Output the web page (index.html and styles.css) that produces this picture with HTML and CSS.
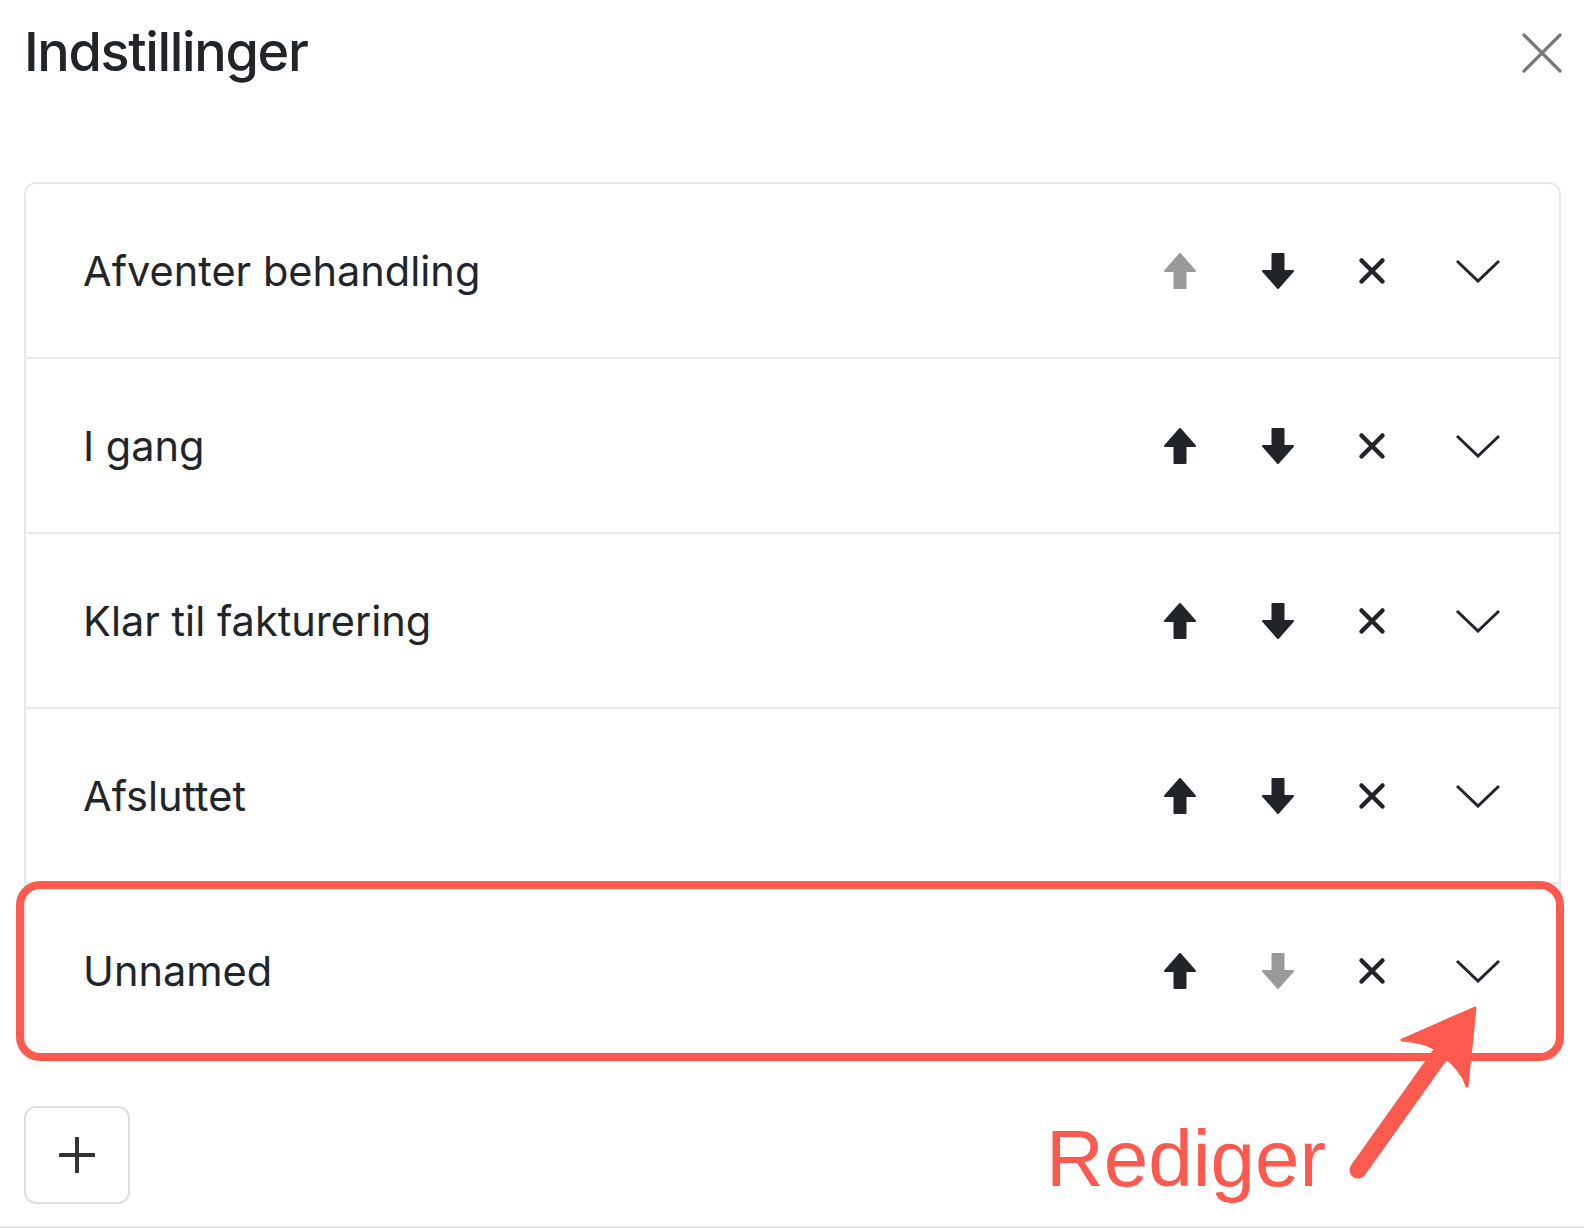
FILE: index.html
```html
<!DOCTYPE html>
<html lang="da">
<head>
<meta charset="utf-8">
<title>Indstillinger</title>
<link rel="stylesheet" href="styles.css">
</head>
<body>
<div class="modal">
  <header class="modal-header">
    <h1 class="modal-title">Indstillinger</h1>
    <button class="close-btn" aria-label="Luk">
      <svg width="40" height="40" viewBox="0 0 40 40"><path d="M2 2 L38 38 M38 2 L2 38" stroke="#777" stroke-width="3.2" stroke-linecap="round" fill="none"/></svg>
    </button>
  </header>

  <div class="modal-body">
    <ul class="status-list">
      <li class="status-row">
        <span class="status-name">Afventer behandling</span>
        <div class="row-actions">
          <button class="icon-btn arrow disabled"><svg width="34" height="38" viewBox="0 0 34 38"><path d="M17 2 L32 19 L22.5 19 L22.5 36 L11.5 36 L11.5 19 L2 19 Z" stroke="currentColor" stroke-width="2" stroke-linejoin="round" fill="currentColor"/></svg></button>
          <button class="icon-btn arrow"><svg width="34" height="38" viewBox="0 0 34 38"><path d="M17 36 L32 19 L22.5 19 L22.5 2 L11.5 2 L11.5 19 L2 19 Z" stroke="currentColor" stroke-width="2" stroke-linejoin="round" fill="currentColor"/></svg></button>
          <button class="icon-btn times"><svg width="28" height="28" viewBox="0 0 28 28"><path d="M3.5 3.5 L24.5 24.5 M24.5 3.5 L3.5 24.5" stroke="currentColor" stroke-width="4.5" stroke-linecap="round" fill="none"/></svg></button>
          <button class="icon-btn chevron"><svg width="46" height="24" viewBox="0 0 46 24"><path d="M2 2 L23 22 L44 2" stroke="currentColor" stroke-width="3" fill="none"/></svg></button>
        </div>
      </li>
      <li class="status-row">
        <span class="status-name">I gang</span>
        <div class="row-actions">
          <button class="icon-btn arrow"><svg width="34" height="38" viewBox="0 0 34 38"><path d="M17 2 L32 19 L22.5 19 L22.5 36 L11.5 36 L11.5 19 L2 19 Z" stroke="currentColor" stroke-width="2" stroke-linejoin="round" fill="currentColor"/></svg></button>
          <button class="icon-btn arrow"><svg width="34" height="38" viewBox="0 0 34 38"><path d="M17 36 L32 19 L22.5 19 L22.5 2 L11.5 2 L11.5 19 L2 19 Z" stroke="currentColor" stroke-width="2" stroke-linejoin="round" fill="currentColor"/></svg></button>
          <button class="icon-btn times"><svg width="28" height="28" viewBox="0 0 28 28"><path d="M3.5 3.5 L24.5 24.5 M24.5 3.5 L3.5 24.5" stroke="currentColor" stroke-width="4.5" stroke-linecap="round" fill="none"/></svg></button>
          <button class="icon-btn chevron"><svg width="46" height="24" viewBox="0 0 46 24"><path d="M2 2 L23 22 L44 2" stroke="currentColor" stroke-width="3" fill="none"/></svg></button>
        </div>
      </li>
      <li class="status-row">
        <span class="status-name">Klar til fakturering</span>
        <div class="row-actions">
          <button class="icon-btn arrow"><svg width="34" height="38" viewBox="0 0 34 38"><path d="M17 2 L32 19 L22.5 19 L22.5 36 L11.5 36 L11.5 19 L2 19 Z" stroke="currentColor" stroke-width="2" stroke-linejoin="round" fill="currentColor"/></svg></button>
          <button class="icon-btn arrow"><svg width="34" height="38" viewBox="0 0 34 38"><path d="M17 36 L32 19 L22.5 19 L22.5 2 L11.5 2 L11.5 19 L2 19 Z" stroke="currentColor" stroke-width="2" stroke-linejoin="round" fill="currentColor"/></svg></button>
          <button class="icon-btn times"><svg width="28" height="28" viewBox="0 0 28 28"><path d="M3.5 3.5 L24.5 24.5 M24.5 3.5 L3.5 24.5" stroke="currentColor" stroke-width="4.5" stroke-linecap="round" fill="none"/></svg></button>
          <button class="icon-btn chevron"><svg width="46" height="24" viewBox="0 0 46 24"><path d="M2 2 L23 22 L44 2" stroke="currentColor" stroke-width="3" fill="none"/></svg></button>
        </div>
      </li>
      <li class="status-row">
        <span class="status-name">Afsluttet</span>
        <div class="row-actions">
          <button class="icon-btn arrow"><svg width="34" height="38" viewBox="0 0 34 38"><path d="M17 2 L32 19 L22.5 19 L22.5 36 L11.5 36 L11.5 19 L2 19 Z" stroke="currentColor" stroke-width="2" stroke-linejoin="round" fill="currentColor"/></svg></button>
          <button class="icon-btn arrow"><svg width="34" height="38" viewBox="0 0 34 38"><path d="M17 36 L32 19 L22.5 19 L22.5 2 L11.5 2 L11.5 19 L2 19 Z" stroke="currentColor" stroke-width="2" stroke-linejoin="round" fill="currentColor"/></svg></button>
          <button class="icon-btn times"><svg width="28" height="28" viewBox="0 0 28 28"><path d="M3.5 3.5 L24.5 24.5 M24.5 3.5 L3.5 24.5" stroke="currentColor" stroke-width="4.5" stroke-linecap="round" fill="none"/></svg></button>
          <button class="icon-btn chevron"><svg width="46" height="24" viewBox="0 0 46 24"><path d="M2 2 L23 22 L44 2" stroke="currentColor" stroke-width="3" fill="none"/></svg></button>
        </div>
      </li>
      <li class="status-row">
        <span class="status-name">Unnamed</span>
        <div class="row-actions">
          <button class="icon-btn arrow"><svg width="34" height="38" viewBox="0 0 34 38"><path d="M17 2 L32 19 L22.5 19 L22.5 36 L11.5 36 L11.5 19 L2 19 Z" stroke="currentColor" stroke-width="2" stroke-linejoin="round" fill="currentColor"/></svg></button>
          <button class="icon-btn arrow disabled"><svg width="34" height="38" viewBox="0 0 34 38"><path d="M17 36 L32 19 L22.5 19 L22.5 2 L11.5 2 L11.5 19 L2 19 Z" stroke="currentColor" stroke-width="2" stroke-linejoin="round" fill="currentColor"/></svg></button>
          <button class="icon-btn times"><svg width="28" height="28" viewBox="0 0 28 28"><path d="M3.5 3.5 L24.5 24.5 M24.5 3.5 L3.5 24.5" stroke="currentColor" stroke-width="4.5" stroke-linecap="round" fill="none"/></svg></button>
          <button class="icon-btn chevron"><svg width="46" height="24" viewBox="0 0 46 24"><path d="M2 2 L23 22 L44 2" stroke="currentColor" stroke-width="3" fill="none"/></svg></button>
        </div>
      </li>
    </ul>

    <button class="add-btn" aria-label="Tilføj">
      <svg width="36" height="36" viewBox="0 0 36 36"><path d="M18 1 L18 35 M1 18 L35 18" stroke="#333" stroke-width="4" stroke-linecap="round" fill="none"/></svg>
    </button>
  </div>

  <div class="modal-footer"></div>

  <div class="annotation">
    <div class="focus-ring"></div>
    <svg class="callout-arrow" width="160" height="200" viewBox="0 0 160 200">
      <path d="M18 180 L112 48" stroke="#fd5a4f" stroke-width="17" stroke-linecap="round" fill="none"/>
      <path d="M135 18 L62 50 Q92 52 104 66 Q122 80 127 96 Z" fill="#fd5a4f" stroke="#fd5a4f" stroke-width="3" stroke-linejoin="round"/>
    </svg>
    <span class="callout-label">Rediger</span>
  </div>
</div>
</body>
</html>
```

FILE: styles.css
```css
html, body {
  margin: 0;
  padding: 0;
  background: #ffffff;
}

body {
  font-family: Inter, "Liberation Sans", Arial, sans-serif;
  color: #212529;
}

.modal {
  position: relative;
  width: 1584px;
  height: 1228px;
  box-sizing: border-box;
  display: flex;
  flex-direction: column;
}

.modal-header {
  display: flex;
  justify-content: space-between;
  align-items: flex-start;
  height: 182px;
  box-sizing: border-box;
  padding: 25px 22px 0 24px;
}

.modal-title {
  margin: 0;
  font-size: 54px;
  line-height: 54px;
  font-weight: 500;
  letter-spacing: -1.35px;
  color: #212529;
}

.close-btn {
  margin-top: 8px;
  padding: 0;
  border: 0;
  background: none;
  display: flex;
}

.modal-body {
  padding: 0 23px 0 24px;
}

.status-list {
  list-style: none;
  margin: 0;
  padding: 0;
  border: 2px solid #e8e8e8;
  border-radius: 12px;
}

.status-row {
  display: flex;
  align-items: center;
  justify-content: space-between;
  height: 175px;
  box-sizing: border-box;
  padding: 0 58px 0 57px;
  border-bottom: 2px solid #e8e8e8;
}

.status-row:last-child {
  border-bottom: 0;
  height: 174px;
}

.status-name {
  font-size: 41.5px;
  font-weight: 400;
  letter-spacing: 0;
  color: #212529;
}

.row-actions {
  display: flex;
  align-items: center;
}

.icon-btn {
  padding: 0;
  border: 0;
  background: none;
  display: flex;
  color: #212529;
}

.icon-btn.disabled {
  color: #9a9a9a;
}

.icon-btn + .icon-btn {
  margin-left: 64px;
}

.icon-btn.times {
  margin-left: 63px;
}

.icon-btn.chevron {
  margin-left: 69px;
}

.add-btn {
  margin-top: 46px;
  width: 106px;
  height: 98px;
  box-sizing: border-box;
  border: 2px solid #dedede;
  border-radius: 12px;
  background: #fff;
  display: flex;
  align-items: center;
  justify-content: center;
  padding: 0;
}

.modal-footer {
  margin-top: auto;
  border-top: 2px solid #e6e6e6;
}

.annotation {
  position: absolute;
  inset: 0;
  pointer-events: none;
}

.focus-ring {
  position: absolute;
  left: 16px;
  top: 881px;
  width: 1548px;
  height: 180px;
  box-sizing: border-box;
  border: 8px solid #fd5a4f;
  border-radius: 24px;
}

.callout-arrow {
  position: absolute;
  left: 1340px;
  top: 990px;
}

.callout-label {
  position: absolute;
  left: 1046px;
  top: 1119px;
  font-family: "Liberation Sans", Arial, sans-serif;
  font-size: 80px;
  line-height: 80px;
  color: #fd5a4f;
  letter-spacing: 0;
}
```
